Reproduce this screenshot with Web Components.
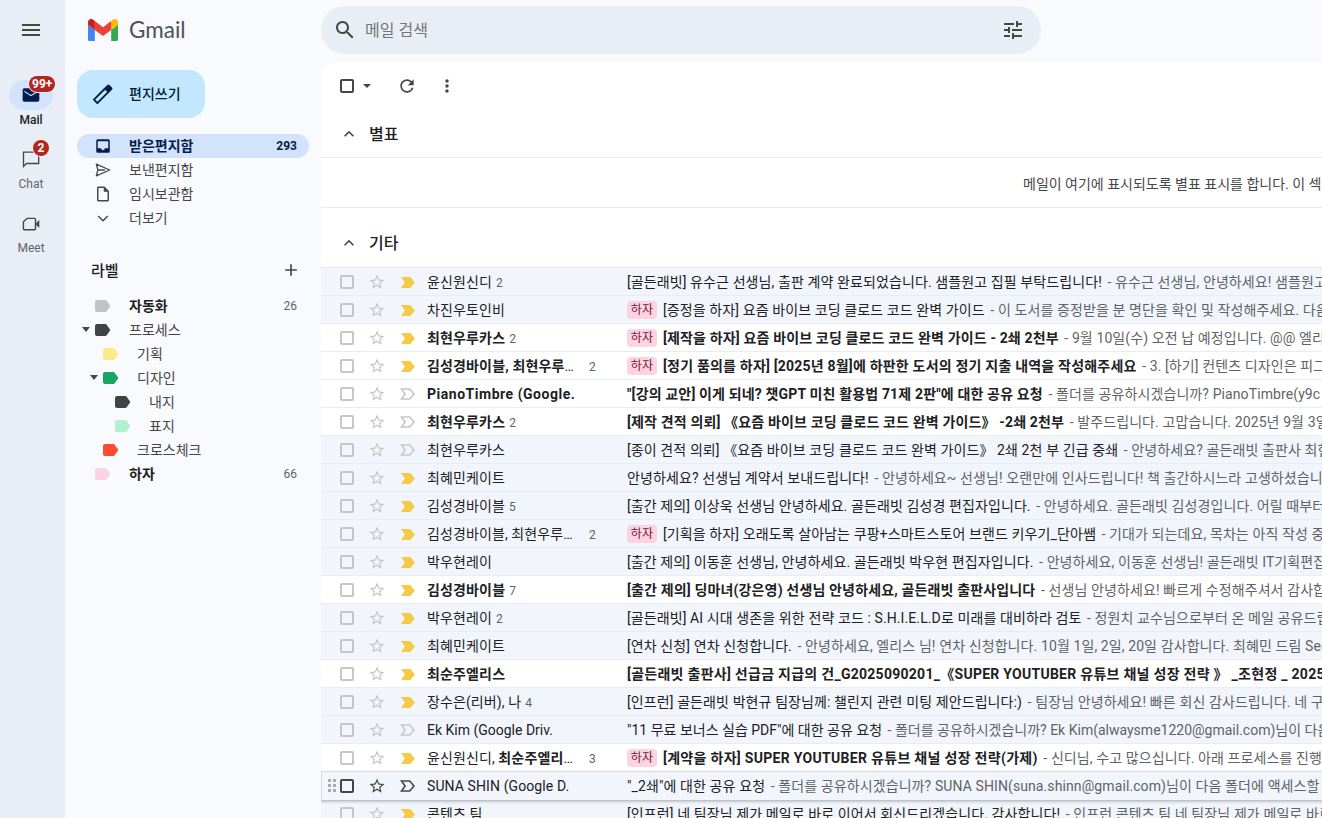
<!DOCTYPE html>
<html lang="ko"><head><meta charset="utf-8"><title>Gmail</title>
<style>
html,body{margin:0;height:100%;overflow:hidden}
body{background:#f8fafd;font:14px Roboto,"Noto Sans CJK KR",sans-serif;color:#202124}
gm-app b{font-weight:700;letter-spacing:.15px}
gm-app b.wide{letter-spacing:.52px}
</style></head><body>
<gm-app>
  <gm-rail slot="rail">
    <gm-rail-item label="Mail" badge="99+" active></gm-rail-item>
    <gm-rail-item label="Chat" badge="2"></gm-rail-item>
    <gm-rail-item label="Meet"></gm-rail-item>
  </gm-rail>
  <gm-sidebar slot="side">
    <gm-nav active count="293" icon="inbox">받은편지함</gm-nav>
    <gm-nav icon="send">보낸편지함</gm-nav>
    <gm-nav icon="draft">임시보관함</gm-nav>
    <gm-nav icon="more">더보기</gm-nav>
    <gm-label slot="labels" color="#c2c2c2" bold count="26">자동화</gm-label>
    <gm-label slot="labels" color="#434343" caret>프로세스</gm-label>
    <gm-label slot="labels" color="#fde98a" level="1">기획</gm-label>
    <gm-label slot="labels" color="#16a765" level="1" caret>디자인</gm-label>
    <gm-label slot="labels" color="#434343" level="2">내지</gm-label>
    <gm-label slot="labels" color="#b3efd3" level="2">표지</gm-label>
    <gm-label slot="labels" color="#fb4c2f" level="1">크로스체크</gm-label>
    <gm-label slot="labels" color="#fcd3e1" bold count="66">하자</gm-label>
  </gm-sidebar>
  <gm-search slot="search"></gm-search>
  <gm-mail slot="main">
    <gm-toolbar></gm-toolbar>
    <gm-section title="별표" class="starred"></gm-section>
    <gm-empty>메일이 여기에 표시되도록 별표 표시를 합니다. 이 섹</gm-empty>
    <gm-section title="기타" class="other"></gm-section>
    <gm-row read arrow="on" count="2"><span slot="from">윤신원신디</span><span slot="subj">[골든래빗] 유수근 선생님, 출판 계약 완료되었습니다. 샘플원고 집필 부탁드립니다!</span><span slot="snip">유수근 선생님, 안녕하세요! 샘플원고</span></gm-row>
    <gm-row read arrow="on" chip><span slot="from">차진우토인비</span><span slot="subj">[증정을 하자] 요즘 바이브 코딩 클로드 코드 완벽 가이드</span><span slot="snip">이 도서를 증정받을 분 명단을 확인 및 작성해주세요. 다음</span></gm-row>
    <gm-row unread arrow="on" chip count="2"><span slot="from"><b>최현우루카스</b></span><span slot="subj">[제작을 하자] 요즘 바이브 코딩 클로드 코드 완벽 가이드 - 2쇄 2천부</span><span slot="snip">9월 10일(수) 오전 납 예정입니다. @@ 엘리</span></gm-row>
    <gm-row unread arrow="on" chip count="2" trunc style="--bls:.2px"><span slot="from"><b>김성경바이블, 최현우루카스</b></span><span slot="subj">[정기 품의를 하자] [2025년 8월]에 하판한 도서의 정기 지출 내역을 작성해주세요</span><span slot="snip">3. [하기] 컨텐츠 디자인은 피그</span></gm-row>
    <gm-row unread arrow="off" latin><span slot="from"><b class="wide">PianoTimbre (Google.</b></span><span slot="subj">"[강의 교안] 이게 되네? 챗GPT 미친 활용법 71제 2판"에 대한 공유 요청</span><span slot="snip">폴더를 공유하시겠습니까? PianoTimbre(y9c</span></gm-row>
    <gm-row unread arrow="off" count="2"><span slot="from"><b>최현우루카스</b></span><span slot="subj">[제작 견적 의뢰] 《요즘 바이브 코딩 클로드 코드 완벽 가이드》 -2쇄 2천부</span><span slot="snip">발주드립니다. 고맙습니다. 2025년 9월 3일</span></gm-row>
    <gm-row read arrow="off"><span slot="from">최현우루카스</span><span slot="subj">[종이 견적 의뢰] 《요즘 바이브 코딩 클로드 코드 완벽 가이드》 2쇄 2천 부 긴급 중쇄</span><span slot="snip">안녕하세요? 골든래빗 출판사 최현</span></gm-row>
    <gm-row read arrow="on"><span slot="from">최혜민케이트</span><span slot="subj">안녕하세요? 선생님 계약서 보내드립니다!</span><span slot="snip">안녕하세요~ 선생님! 오랜만에 인사드립니다! 책 출간하시느라 고생하셨습니다</span></gm-row>
    <gm-row read arrow="on" count="5"><span slot="from">김성경바이블</span><span slot="subj">[출간 제의] 이상욱 선생님 안녕하세요. 골든래빗 김성경 편집자입니다.</span><span slot="snip">안녕하세요. 골든래빗 김성경입니다. 어릴 때부터</span></gm-row>
    <gm-row read arrow="on" chip count="2" trunc><span slot="from">김성경바이블, 최현우루카스</span><span slot="subj">[기획을 하자] 오래도록 살아남는 쿠팡+스마트스토어 브랜드 키우기_단아쌤</span><span slot="snip">기대가 되는데요, 목차는 아직 작성 중</span></gm-row>
    <gm-row read arrow="on"><span slot="from">박우현레이</span><span slot="subj">[출간 제의] 이동훈 선생님, 안녕하세요. 골든래빗 박우현 편집자입니다.</span><span slot="snip">안녕하세요, 이동훈 선생님! 골든래빗 IT기획편집</span></gm-row>
    <gm-row unread arrow="on" count="7"><span slot="from"><b>김성경바이블</b></span><span slot="subj">[출간 제의] 딩마녀(강은영) 선생님 안녕하세요, 골든래빗 출판사입니다</span><span slot="snip">선생님 안녕하세요! 빠르게 수정해주셔서 감사합</span></gm-row>
    <gm-row read arrow="on" count="2"><span slot="from">박우현레이</span><span slot="subj">[골든래빗] AI 시대 생존을 위한 전략 코드 : S.H.I.E.L.D로 미래를 대비하라 검토</span><span slot="snip">정원치 교수님으로부터 온 메일 공유드립</span></gm-row>
    <gm-row read arrow="on"><span slot="from">최혜민케이트</span><span slot="subj">[연차 신청] 연차 신청합니다.</span><span slot="snip">안녕하세요, 엘리스 님! 연차 신청합니다. 10월 1일, 2일, 20일 감사합니다. 최혜민 드림 Sen</span></gm-row>
    <gm-row unread arrow="on" style="--bls:.27px"><span slot="from"><b>최순주엘리스</b></span><span slot="subj">[골든래빗 출판사] 선급금 지급의 건_G2025090201_《SUPER YOUTUBER 유튜브 채널 성장 전략 》 _조현정 _ 2025</span></gm-row>
    <gm-row read arrow="on" count="4"><span slot="from">장수은(리버), 나</span><span slot="subj">[인프런] 골든래빗 박현규 팀장님께: 챌린지 관련 미팅 제안드립니다:)</span><span slot="snip">팀장님 안녕하세요! 빠른 회신 감사드립니다. 네 구</span></gm-row>
    <gm-row read arrow="off" latin style="--ls:0px"><span slot="from">Ek Kim (Google Driv.</span><span slot="subj">"11 무료 보너스 실습 PDF"에 대한 공유 요청</span><span slot="snip">폴더를 공유하시겠습니까? Ek Kim(alwaysme1220@gmail.com)님이 다음</span></gm-row>
    <gm-row unread arrow="on" chip count="3" trunc style="--bls:.3px;--fw:146px"><span slot="from">윤신원신디, <b>최순주엘리스</b></span><span slot="subj">[계약을 하자] SUPER YOUTUBER 유튜브 채널 성장 전략(가제)</span><span slot="snip">신디님, 수고 많으십니다. 아래 프로세스를 진행</span></gm-row>
    <gm-row read hover arrow="off" latin><span slot="from">SUNA SHIN (Google D.</span><span slot="subj">"_2쇄"에 대한 공유 요청</span><span slot="snip">폴더를 공유하시겠습니까? SUNA SHIN(suna.shinn@gmail.com)님이 다음 폴더에 액세스할 수</span></gm-row>
    <gm-row read arrow="on"><span slot="from">콘텐츠 팀</span><span slot="subj">[인프런] 네 팀장님 제가 메일로 바로 이어서 회신드리겠습니다. 감사합니다!</span><span slot="snip">인프런 콘텐츠 팀 네 팀장님 제가 메일로 바로</span></gm-row>
  </gm-mail>
</gm-app>
<script>
const svg=(d,s,c='currentColor',vb='0 0 24 24')=>`<svg width="${s}" height="${s}" viewBox="${vb}" fill="${c}" aria-hidden="true"><path d="${d}"/></svg>`;
function def(name,css,html){
  customElements.define(name,class extends HTMLElement{
    connectedCallback(){
      if(this.shadowRoot)return;
      const r=this.attachShadow({mode:'open'});
      r.innerHTML=`<style>${css}</style>`+(typeof html==='function'?html(this):html);
    }
  });
}
def('gm-app',`:host{display:grid;grid-template-columns:65px 256px 1001px;grid-template-rows:62px 756px;height:818px;overflow:hidden}
 .r{grid-row:1/3;grid-column:1;background:#e9eef6;display:block}
 .s{grid-row:1/3;grid-column:2;display:block}
 .q{grid-row:1;grid-column:3;display:block}
 .m{grid-row:2;grid-column:3;display:block;overflow:hidden}`,
 `<div class="r"><slot name="rail"></slot></div><div class="s"><slot name="side"></slot></div><div class="q"><slot name="search"></slot></div><div class="m"><slot name="main"></slot></div>`);

def('gm-rail',`:host{display:flex;flex-direction:column;align-items:center;width:62px}
 .menu{height:60px;display:flex;align-items:center;justify-content:center;color:#444746;margin-bottom:20px}
 .items{display:flex;flex-direction:column;align-items:center}`,
 `<div class="menu">${svg('M3 18h18v-2H3v2zm0-5h18v-2H3v2zm0-7v2h18V6H3z',24)}</div><div class="items"><slot></slot></div>`);

const railIcons={
 Mail:svg('M20 4H4c-1.1 0-1.99.9-1.99 2L2 18c0 1.1.9 2 2 2h16c1.1 0 2-.9 2-2V6c0-1.1-.9-2-2-2zm0 4.4l-8 5-8-5V7l8 5 8-5v1.4z',20),
 Chat:`<svg width="20" height="20" viewBox="0 0 24 24" fill="none" stroke="currentColor" stroke-width="1.6"><path d="M3 3.8h18.2v13.6H6.6L3 21z"/></svg>`,
 Meet:`<svg width="20" height="20" viewBox="0 0 24 24"><path fill="none" stroke="currentColor" stroke-width="1.7" d="M7.4 5.2h9a1 1 0 0 1 1 1v11.6a1 1 0 0 1-1 1H3.9a1 1 0 0 1-1-1V9.4z"/><path fill="currentColor" d="M18.2 10.8L22 7.2v9.6l-3.8-3.6z"/></svg>`};
def('gm-rail-item',`:host{display:flex;flex-direction:column;align-items:center;height:64px;width:62px;font-size:12px;color:#5f6368;font-family:Roboto,sans-serif}
 .pill{position:relative;width:44px;height:30px;border-radius:16px;display:flex;align-items:center;justify-content:center;margin-bottom:2px;color:#444746}
 :host([active]) .pill{background:#d3e3fd;color:#041e49}
 :host([active]) .t{font-weight:500;color:#202124}
 :host([label="Meet"]) svg{position:relative;top:1px}
 .t{line-height:16px}
 .b{position:absolute;background:#b3261e;color:#fff;font-weight:700;font-size:12px;line-height:16px;height:16px;border-radius:8px;top:-4px;left:20px;padding:0 3px;min-width:10px;text-align:center;box-shadow:0 0 0 1px #e9eef6}
 :host([label="Chat"]) .b{left:24px;width:16px;min-width:0;padding:0;box-sizing:border-box}
 svg{display:block}`,
 h=>{const l=h.getAttribute('label');return `<div class="pill">${railIcons[l]}${h.hasAttribute('badge')?`<span class="b">${h.getAttribute('badge')}</span>`:''}</div><div class="t">${l}</div>`});

const G=`<svg width="30" height="22.5" viewBox="52 42 88 66" style="display:block"><path fill="#4285f4" d="M58 108h14V74L52 59v43c0 3.32 2.69 6 6 6"/><path fill="#34a853" d="M120 108h14c3.32 0 6-2.69 6-6V59l-20 15"/><path fill="#fbbc04" d="M120 48v26l20-15v-8c0-7.42-8.47-11.65-14.4-7.2"/><path fill="#ea4335" d="M72 74V48l24 18 24-18v26L96 92"/><path fill="#c5221f" d="M52 51v8l20 15V48l-5.6-4.2c-5.94-4.45-14.4-.22-14.4 7.2"/></svg>`;
const pencil=`<svg width="24" height="24" viewBox="0 0 24 24" style="display:block"><g transform="rotate(45 12 12)"><path fill="none" stroke="#041e49" stroke-width="1.9" stroke-linejoin="round" d="M9.600 7v15.400h4.800V7"/><path fill="#041e49" d="M8.700 7.600V2.600a1.600 1.600 0 0 1 1.600-1.600h3.400a1.600 1.600 0 0 1 1.600 1.600v5z"/></g></svg>`;
def('gm-sidebar',`:host{display:block;height:818px}
 .logo{height:60px;padding-left:23px;display:flex;align-items:center;gap:11px;color:#4d5156;font:400 22.5px Lato,Roboto,sans-serif}
 .logo span{position:relative;top:-1px}
 .compose{margin:10px 0 16px 12px;width:128px;height:48px;border-radius:16px;background:#c2e7ff;display:flex;align-items:center;box-sizing:border-box;padding-left:14px;gap:14px;font-weight:500;font-size:14px;color:#001d35}
 .compose span{position:relative;top:-1px}
 .nav{display:flex;flex-direction:column;margin-left:12px;width:232px}
 .lh{display:flex;justify-content:space-between;align-items:center;box-sizing:border-box;height:24px;margin:28px 0 12px;padding:0 0 0 26px;width:236px;font-size:15px;font-weight:500;color:#1f1f1f}
 .lh span{position:relative;top:-1px}
 .lh svg{display:block}
 .labels{display:flex;flex-direction:column;width:244px}`,
 `<div class="logo">${G}<span>Gmail</span></div>
  <div class="compose">${pencil}<span>편지쓰기</span></div>
  <div class="nav"><slot></slot></div>
  <div class="lh"><span>라벨</span>${svg('M19 13h-6v6h-2v-6H5v-2h6V5h2v6h6v2z',20,'#444746')}</div>
  <div class="labels"><slot name="labels"></slot></div>`);

const navIcons={
 inbox:'<svg width="18" height="18" viewBox="0 0 24 24" fill="#041e49"><path fill-rule="evenodd" d="M5 3h14a2 2 0 0 1 2 2v14a2 2 0 0 1-2 2H5a2 2 0 0 1-2-2V5a2 2 0 0 1 2-2zm0 2.500v9.500h4.500c0 1.400 1.100 2.500 2.500 2.500s2.500-1.100 2.500-2.500H19V5.500z"/></svg>',
 send:'<svg width="18" height="18" viewBox="0 0 18 18" fill="none" stroke="currentColor" stroke-width="1.3" stroke-linejoin="round"><path d="M2.300 3.200L15.700 9 2.300 14.800 3.900 9zM3.900 9h7"/></svg>',
 draft:svg('M14 2H6c-1.1 0-1.99.9-1.99 2L4 20c0 1.1.89 2 1.99 2H18c1.1 0 2-.9 2-2V8l-6-6zM6 20V4h7v5h5v11H6z',18),
 more:'<svg width="18" height="18" viewBox="0 0 18 18" fill="none" stroke="currentColor" stroke-width="1.4"><path d="M4.200 7l4.800 4.800L13.800 7"/></svg>'};
def('gm-nav',`:host{display:flex;align-items:center;height:24px;border-radius:12px;padding:0 12px 0 17px;color:#444746;font-size:14px}
 :host([active]){background:#d3e3fd;color:#041e49;font-weight:700}
 .i{width:18px;height:18px;margin-right:17px;flex:none}
 svg{display:block}
 .l{flex:1;position:relative;top:-1px}.c{font-size:12px;font-weight:700}`,
 h=>`<span class="i">${navIcons[h.getAttribute('icon')]}</span><span class="l"><slot></slot></span>${h.hasAttribute('count')?`<span class="c">${h.getAttribute('count')}</span>`:''}`);

def('gm-label',`:host{display:flex;align-items:center;height:24px;color:#444746;font-size:14px;position:relative;padding-right:12px;padding-left:30px}
 :host([bold]){font-weight:700;color:#1f1f1f}
 :host([level="1"]){padding-left:38px}
 :host([level="2"]){padding-left:50px}
 .tag{flex:none;width:16px;height:12px;margin-right:18px}
 svg{display:block}
 .caret{position:absolute;top:9px;left:17px;width:0;height:0;border:4px solid transparent;border-top:5px solid #444746;border-bottom:0}
 :host([level="1"]) .caret{left:25px}
 .l{flex:1;position:relative;top:-1px}.c{font-size:12px;color:#5f6368;font-weight:400}`,
 h=>`${h.hasAttribute('caret')?'<i class="caret"></i>':''}<svg class="tag" viewBox="0 0 16 12"><path fill="${h.getAttribute('color')}" d="M2 0h8.400c.5 0 1 .25 1.300.65L15.400 6l-3.700 5.350c-.3.4-.8.65-1.300.65H2a2 2 0 0 1-2-2V2a2 2 0 0 1 2-2z"/></svg><span class="l"><slot></slot></span>${h.hasAttribute('count')?`<span class="c">${h.getAttribute('count')}</span>`:''}`);

def('gm-search',`:host{display:block;padding-top:6px}
 .b{width:720px;height:48px;border-radius:24px;background:#e9eef6;display:flex;align-items:center;box-sizing:border-box;padding:0 16px 0 12px;color:#444746}
 .t{flex:1;margin-left:8px;font-size:16px;color:#757575;position:relative;top:-1px}
 svg{display:block}`,
 `<div class="b">${svg('M15.5 14h-.79l-.28-.27C15.41 12.59 16 11.11 16 9.5 16 5.91 13.09 3 9.5 3S3 5.91 3 9.5 5.91 16 9.5 16c1.61 0 3.09-.59 4.23-1.57l.27.28v.79l5 4.99L20.49 19l-4.99-5zm-6 0C7.01 14 5 11.99 5 9.5S7.01 5 9.5 5 14 7.01 14 9.5 11.99 14 9.5 14z',24)}<span class="t">메일 검색</span>${svg('M3 17v2h6v-2H3zM3 5v2h10V5H3zm10 16v-2h8v-2h-8v-2h-2v6h2zM7 9v2H3v2h4v2h2V9H7zm14 4v-2H11v2h10zm-6-4h2V7h4V5h-4V3h-2v6z',24)}</div>`);

def('gm-mail',`:host{display:block;background:#fff;border-top-left-radius:16px;height:756px;overflow:hidden}`,`<slot></slot>`);

def('gm-toolbar',`:host{display:flex;align-items:center;height:48px;padding-left:19px;color:#444746}
 .cb{width:10px;height:10px;border:2px solid #444746;border-radius:2px}
 .car{width:0;height:0;border:4px solid transparent;border-top:4px solid #444746;border-bottom:0;margin-left:9px}
 .a{margin-left:26px}.m{margin-left:20px}
 svg{display:block}`,
 `<div class="cb"></div><div class="car"></div><span class="a">${svg('M17.65 6.35C16.2 4.9 14.21 4 12 4c-4.42 0-7.99 3.58-7.99 8s3.57 8 7.99 8c3.73 0 6.84-2.55 7.73-6h-2.08c-.82 2.33-3.04 4-5.65 4-3.31 0-6-2.69-6-6s2.69-6 6-6c1.66 0 3.14.69 4.22 1.78L13 11h7V4l-2.35 2.35z',20)}</span><span class="m">${svg('M12 8c1.1 0 2-.9 2-2s-.9-2-2-2-2 .9-2 2 .9 2 2 2zm0 2c-1.1 0-2 .9-2 2s.9 2 2 2 2-.9 2-2-.9-2-2-2zm0 6c-1.1 0-2 .9-2 2s.9 2 2 2 2-.9 2-2-.9-2-2-2z',20)}</span>`);

def('gm-section',`:host{display:flex;align-items:center;height:47px;padding-left:18px;color:#1f1f1f;border-bottom:1px solid #ebebeb}
 :host(.other){height:60px;padding-top:11px;box-sizing:border-box;border-bottom:1px solid #e6eaf0}
 svg{display:block;margin-right:10px;color:#444746}
 span{font-size:16px;font-weight:500;position:relative;top:-1px}`,
 h=>`${svg('M12 8l-6 6 1.41 1.41L12 10.83l4.59 4.58L18 14l-6-6z',20)}<span>${h.getAttribute('title')}</span>`);

def('gm-empty',`:host{display:block;height:49px;line-height:53px;padding-left:702px;white-space:nowrap;overflow:hidden;font-size:14px;color:#444746;border-bottom:1px solid #ebebeb}`,`<slot></slot>`);

const star=c=>svg('M22 9.24l-7.19-.62L12 2 9.19 8.63 2 9.24l5.46 4.73L5.82 21 12 17.27 18.18 21l-1.63-7.03L22 9.24zM12 15.4l-3.76 2.27 1-4.28-3.32-2.88 4.38-.38L12 6.1l1.71 4.04 4.38.38-3.32 2.88 1 4.28L12 15.4z',18,c);
const arrow=(on,hov)=>on
 ?`<svg width="14" height="11" viewBox="0 0 14 11" style="display:block"><path fill="#f7c948" d="M0 0h9.300L14 5.500 9.300 11H0l3.900-5.500z"/></svg>`
 :`<svg width="15" height="12" viewBox="0 0 15 12" style="display:block;margin-left:-1px"><path fill="none" stroke="${hov?'#444746':'#c4c7c5'}" stroke-width="1.6" d="M1.500 1h8.200L14 6l-4.300 5H1.500l3.600-5z"/></svg>`;
const dots=`<svg class="d" width="8" height="14" viewBox="0 0 8 14"><g fill="#a8abaf"><rect width="3" height="3"/><rect x="5" width="3" height="3"/><rect y="5" width="3" height="3"/><rect x="5" y="5" width="3" height="3"/><rect y="10" width="3" height="3"/><rect x="5" y="10" width="3" height="3"/></g></svg>`;
def('gm-row',`:host{display:flex;align-items:center;height:28px;background:#fff;box-shadow:inset 0 -1px 0 #e8edf3;padding-left:19px;font-size:14px;color:#202124;white-space:nowrap;position:relative;overflow:hidden;letter-spacing:var(--ls,.1px)}
 :host([read]){background:#f2f6fc}
 :host([hover]){overflow:visible;z-index:2;box-shadow:inset 1px 0 0 #dadce0,0 1px 3px 1px rgba(60,64,67,.2),0 1px 2px rgba(60,64,67,.2)}
 .d{position:absolute;left:7px;top:7px}
 .cb{flex:none;width:10px;height:10px;border:2px solid #c4c7c5;border-radius:2px}
 :host([hover]) .cb{border-color:#444746}
 .st{flex:none;margin-left:14px;width:18px}
 .ar{flex:none;margin-left:15px;width:14px}
 svg{display:block}
 .from{flex:none;width:200px;margin-left:12px;display:flex;align-items:center;overflow:hidden}
 .fn{display:block;overflow:hidden;text-overflow:ellipsis;white-space:nowrap;position:relative;top:-1px}
 :host([latin]) .fn{top:0}
 :host([trunc]) .fn{width:var(--fw,150px)}
 .n{font-size:12px;color:#5f6368;margin-left:4px;position:relative;top:1px}
 :host([trunc]) .n{margin-left:calc(162px - var(--fw,150px))}
 .body{flex:1;min-width:0;display:flex;align-items:center;overflow:hidden}
 .chip{flex:none;font-size:12px;width:30px;height:18px;line-height:18px;text-align:center;background:#fcd3e1;color:#711a36;border-radius:4px;margin-right:6px}
 :host([unread]) .sj{font-weight:700;letter-spacing:var(--bls,.15px)}
 .sj,.sn{flex:none;position:relative;top:-1px}
 .sn{color:#5f6368;margin-left:2px}`,
 h=>{const on=h.getAttribute('arrow')=='on',hov=h.hasAttribute('hover');const hasSnip=h.querySelector('[slot=snip]');
 return `${hov?dots:''}<div class="cb"></div><span class="st">${star(hov?'#444746':'#c4c7c5')}</span><span class="ar">${arrow(on,hov)}</span>
 <div class="from"><span class="fn"><slot name="from"></slot></span>${h.hasAttribute('count')?`<span class="n">${h.getAttribute('count')}</span>`:''}</div>
 <div class="body">${h.hasAttribute('chip')?'<span class="chip">하자</span>':''}<span class="sj"><slot name="subj"></slot></span>${hasSnip?`<span class="sn">&nbsp;- <slot name="snip"></slot></span>`:''}</div>`});
</script>
</body></html>
